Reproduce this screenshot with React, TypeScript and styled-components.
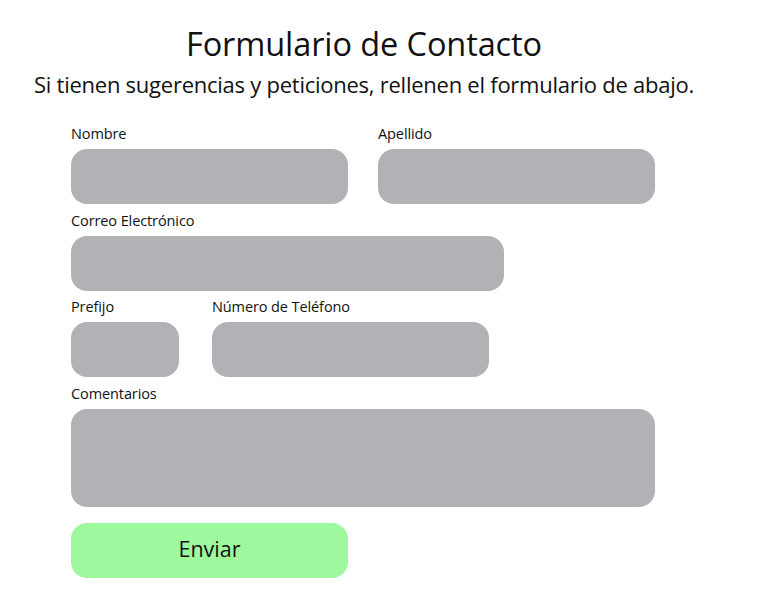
import React from "react";
import styled, { createGlobalStyle } from "styled-components";

const Global = createGlobalStyle`
  html, body { margin: 0; padding: 0; background: #fff; }
  body { font-family: "Open Sans", "Noto Sans", sans-serif; color: #111; }
  * { box-sizing: border-box; }
`;

const Page = styled.div`
  width: 776px;
  padding-top: 24px;
`;

const Header = styled.header`
  width: 728px;
  display: flex;
  flex-direction: column;
  align-items: center;
  gap: 5px;
`;

const Title = styled.h1`
  margin: 0;
  font-size: 32.5px;
  font-weight: 400;
  line-height: 40px;
  letter-spacing: -0.1px;
`;

const Subtitle = styled.p`
  margin: 0;
  font-size: 22px;
  line-height: 30px;
  letter-spacing: -0.25px;
`;

const Form = styled.form`
  display: flex;
  flex-direction: column;
  align-items: flex-start;
  gap: 8px;
  padding: 26px 0 0 71px;
`;

const Row = styled.div<{ $gap?: number; $lift?: number }>`
  display: flex;
  gap: ${(p) => p.$gap ?? 30}px;
  margin-top: ${(p) => -(p.$lift ?? 0)}px;
`;

const Field = styled.label`
  display: flex;
  flex-direction: column;
  gap: 6px;
`;

const LabelText = styled.span`
  font-size: 14.5px;
  line-height: 18px;
  letter-spacing: -0.1px;
`;

const Input = styled.input<{ $w: number }>`
  width: ${(p) => p.$w}px;
  height: 55px;
  border: none;
  border-radius: 16px;
  background: #b1b2b5;
  outline: none;
  padding: 0 14px;
  font: inherit;
`;

const TextArea = styled.textarea`
  width: 584px;
  height: 98px;
  border: none;
  border-radius: 16px;
  background: #b1b2b5;
  outline: none;
  resize: none;
  display: block;
  padding: 12px 14px;
  font: inherit;
`;

const Button = styled.button`
  margin-top: 8px;
  width: 277px;
  height: 55px;
  padding-bottom: 6px;
  border: none;
  border-radius: 16px;
  background: #9ef89e;
  font-family: inherit;
  font-size: 21.5px;
  color: #111;
  cursor: pointer;
`;

export default function App() {
  return (
    <Page>
      <Global />
      <Header>
        <Title>Formulario de Contacto</Title>
        <Subtitle>Si tienen sugerencias y peticiones, rellenen el formulario de abajo.</Subtitle>
      </Header>
      <Form onSubmit={(e) => e.preventDefault()}>
        <Row>
          <Field>
            <LabelText>Nombre</LabelText>
            <Input $w={277} />
          </Field>
          <Field>
            <LabelText>Apellido</LabelText>
            <Input $w={277} />
          </Field>
        </Row>
        <Row>
          <Field>
            <LabelText>Correo Electrónico</LabelText>
            <Input $w={433} />
          </Field>
        </Row>
        <Row $gap={33} $lift={1}>
          <Field>
            <LabelText>Prefijo</LabelText>
            <Input $w={108} />
          </Field>
          <Field>
            <LabelText>Número de Teléfono</LabelText>
            <Input $w={277} />
          </Field>
        </Row>
        <Row>
          <Field>
            <LabelText>Comentarios</LabelText>
            <TextArea />
          </Field>
        </Row>
        <Button type="submit">Enviar</Button>
      </Form>
    </Page>
  );
}
